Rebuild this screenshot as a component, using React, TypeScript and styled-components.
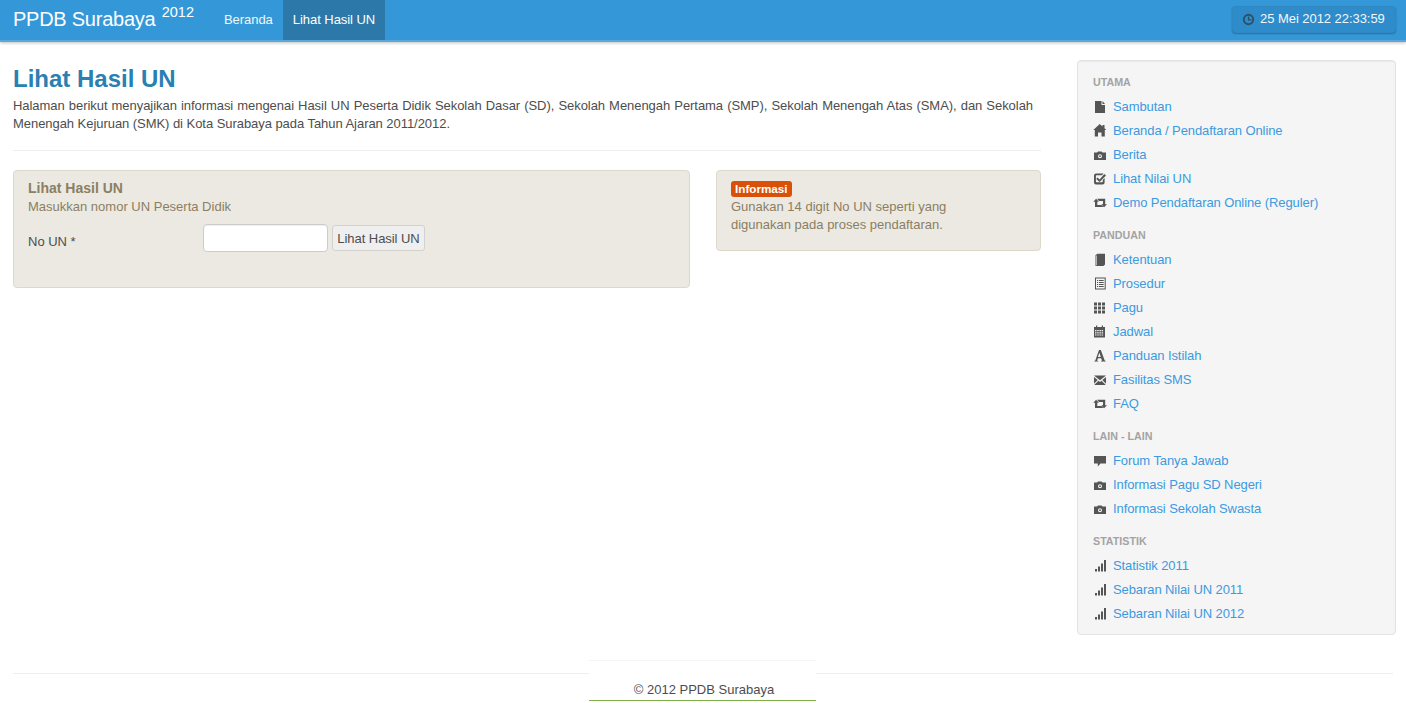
import React from 'react';
import styled, { createGlobalStyle } from 'styled-components';

const GlobalStyle = createGlobalStyle`
  html, body {
    margin: 0;
    padding: 0;
    background: #ffffff;
  }
  body {
    font-family: "Liberation Sans", Arial, sans-serif;
    font-size: 13px;
    line-height: 18px;
    color: #4d4d4d;
  }
`;

const Page = styled.div`
  display: flex;
  flex-direction: column;
  height: 703px;
  overflow: hidden;
`;

const Navbar = styled.header`
  flex: none;
  display: flex;
  align-items: flex-start;
  height: 40px;
  padding: 0 10px 0 13px;
  background: #3498d8;
  border-bottom: 2px solid #5ba6db;
  box-shadow: 0 1px 3px rgba(0, 0, 0, 0.25);
`;

const Brand = styled.a`
  display: block;
  width: 201px;
  font-size: 20px;
  letter-spacing: -0.25px;
  line-height: 38px;
  color: #ffffff;
  white-space: nowrap;

  sup {
    font-size: 14.5px;
    letter-spacing: 0;
    line-height: 0;
    margin-left: 1px;
    position: relative;
    top: -3px;
    vertical-align: 6px;
  }
`;

const NavLinks = styled.nav`
  display: flex;
  flex: 1;
`;

const NavLink = styled.a<{ $active?: boolean }>`
  display: block;
  height: 40px;
  padding: 0 10px;
  line-height: 40px;
  letter-spacing: -0.05px;
  color: #ffffff;
  opacity: ${(p) => (p.$active ? 1 : 0.92)};
  background: ${(p) => (p.$active ? '#2c78a9' : 'transparent')};
`;

const ClockButton = styled.div`
  display: flex;
  align-items: center;
  gap: 5px;
  box-sizing: border-box;
  width: 164px;
  height: 27px;
  margin-top: 6px;
  padding: 0 0 1px 9px;
  border-radius: 4px;
  background: #2f8ccb;
  color: #f2f7fb;
  border: 1px solid #3088c3;
  box-shadow: 0 1px 2px rgba(0, 0, 0, 0.28);
  font-size: 13px;
  letter-spacing: -0.05px;
  white-space: nowrap;
`;

const Body = styled.div`
  flex: 1;
  display: flex;
  align-items: flex-start;
  gap: 36px;
  padding: 0 10px 0 13px;
`;

const Main = styled.main`
  width: 1028px;
  flex: none;
`;

const PageTitle = styled.h1`
  margin: 23px 0 0;
  font-size: 24px;
  line-height: 28px;
  font-weight: bold;
  color: #2a7fb3;
`;

const Lead = styled.p`
  margin: 4px 0 0;
  padding-right: 8px;
  line-height: 18px;
  letter-spacing: -0.05px;
  text-align: justify;
`;

const Rule = styled.hr`
  margin: 17px 0 19px;
  border: 0;
  border-top: 1px solid #eeeeee;
`;

const PanelRow = styled.div`
  display: flex;
  align-items: flex-start;
  gap: 26px;
`;

const Panel = styled.section<{ $width: number; $height: number }>`
  box-sizing: border-box;
  width: ${(p) => p.$width}px;
  height: ${(p) => p.$height}px;
  padding: 9px 14px;
  background: #ece9e2;
  border: 1px solid #dcd8cc;
  border-radius: 4px;
  color: #8a7f63;
`;

const PanelTitle = styled.div`
  font-size: 14px;
  font-weight: bold;
  line-height: 16px;
  margin-bottom: 2px;
`;

const PanelText = styled.div`
  line-height: 18px;
`;

const FormRow = styled.div`
  display: flex;
  align-items: flex-start;
  margin-top: 8px;
`;

const FieldLabel = styled.label`
  width: 175px;
  padding-top: 9px;
  color: #4d4d4d;
`;

const TextInput = styled.input`
  box-sizing: border-box;
  width: 125px;
  height: 28px;
  margin: 0 4px 0 0;
  border: 1px solid #cccccc;
  border-radius: 4px;
  background: #ffffff;
  box-shadow: inset 0 1px 1px rgba(0, 0, 0, 0.07);
`;

const SubmitButton = styled.button`
  box-sizing: border-box;
  width: 93px;
  height: 26px;
  margin-top: 1px;
  padding: 0;
  border: 1px solid #d3d1cc;
  border-radius: 3px;
  background: #efefef;
  color: #4d4d4d;
  font: 13px "Liberation Sans", Arial, sans-serif;
  letter-spacing: -0.05px;
`;

const Badge = styled.span`
  display: block;
  width: fit-content;
  padding: 0 4px;
  margin-top: 1px;
  height: 16px;
  border-radius: 3px;
  background: #d95108;
  color: #ffffff;
  font-size: 11.7px;
  font-weight: bold;
  line-height: 16px;
`;

const InfoText = styled.div`
  width: 240px;
  line-height: 18px;
  margin-top: 1px;
`;

const Sidebar = styled.aside`
  flex: none;
  box-sizing: border-box;
  width: 319px;
  height: 575px;
  margin-top: 18px;
  padding: 9px 15px;
  background: #f5f5f5;
  border: 1px solid #e3e3e3;
  border-radius: 4px;
  box-shadow: inset 0 1px 1px rgba(0, 0, 0, 0.05);
`;

const Group = styled.div`
  & + & {
    margin-top: 9px;
  }
`;

const GroupHeader = styled.div`
  height: 24px;
  line-height: 24px;
  font-size: 10.7px;
  font-weight: bold;
  color: #a3a3a3;
  text-transform: uppercase;
`;

const MenuItem = styled.a`
  display: flex;
  align-items: center;
  gap: 5px;
  box-sizing: border-box;
  height: 24px;
  padding-top: 2px;
  letter-spacing: -0.09px;
  color: #3b9ae0;
`;

const IconBox = styled.svg<{ $tint?: string; $size?: number }>`
  flex: none;
  width: ${(p) => p.$size ?? 15}px;
  height: ${(p) => p.$size ?? 15}px;
  margin-bottom: ${(p) => (p.$size ? 0 : 2)}px;
  fill: ${(p) => p.$tint ?? '#555555'};
`;

const Footer = styled.footer`
  flex: none;
  position: relative;
  margin: 0 13px 2px;
  height: 27px;
  border-top: 1px solid #eeeeee;
`;

const FooterNote = styled.div`
  position: absolute;
  left: 576px;
  bottom: 0;
  box-sizing: border-box;
  width: 227px;
  height: 41px;
  padding: 20px 0 0 3px;
  background: #ffffff;
  border-top: 1px solid #f5f5f5;
  border-bottom: 1px solid #7fae45;
  text-align: center;
`;

type IconName = 'file' | 'home' | 'camera' | 'check' | 'retweet' | 'book' | 'list' | 'th' | 'calendar' | 'font' | 'envelope' | 'comment' | 'signal' | 'time';

const iconShapes: Record<IconName, React.ReactNode> = {
  file: <path d="M2 2h6.500v4H12v8H2zM9.500 2 12 5H9.500z" />,
  home: <path d="M6.700 1 9.500 3.500V2H11.500v3.300L13.300 7H11.800v6.500H8.500V9.500H5v4H1.800V7H.3z" />,
  camera: (
    <path
      fillRule="evenodd"
      d="M1 5.500h3L5 4.500h3.500l1 1H13V13H1zM7 7.200a2 2 0 1 0 0 4 2 2 0 0 0 0-4zM7 8.300a.9.9 0 1 1 0 1.800.9.9 0 0 1 0-1.800z"
    />
  ),
  check: (
    <path
      fillRule="evenodd"
      d="M3 2.500h7.500L9 4.300H3.500a.7.700 0 0 0-.6.6v5.700a.7.700 0 0 0 .6.600h5.700a.7.700 0 0 0 .6-.6V9l1.800-2v4.500a2 2 0 0 1-2 2H3a2 2 0 0 1-2-2v-7a2 2 0 0 1 2-2zM4.500 6.500 6.600 8.400 11.300 3l1.700 1.500L6.700 11 3.200 8z"
    />
  ),
  retweet: <path d="M.3 6.700 3.100 3.800 5.900 6.700H4.300v3.200h4.200l2 2.200H2V6.700zM4 3.800h8.200v5.500H14l-2.900 2.900-2.800-2.900H10V6H6z" />,
  book: (
    <path
      fillRule="evenodd"
      d="M2.500 3 4.500 1.800H12v10.700l-1.500 1.500H2.500zM3.200 3.400v9.900h.6V3.400z"
    />
  ),
  list: (
    <path
      fillRule="evenodd"
      d="M2 1.500h10.700v12H2zM3 2.500v10h8.700v-10zM4 4h1.200v1H4zM6 4h4.700v1H6zM4 6h1.200v1H4zM6 6h4.700v1H6zM4 8h1.200v1H4zM6 8h4.700v1H6zM4 10h1.200v1H4zM6 10h4.700v1H6z"
    />
  ),
  th: <path d="M1 2.500h3v3H1zM5 2.500h3v3H5zM9 2.500h3v3H9zM1 6.500h3v3H1zM5 6.500h3v3H5zM9 6.500h3v3H9zM1 10.500h3v3H1zM5 10.500h3v3H5zM9 10.500h3v3H9z" />,
  calendar: (
    <path
      fillRule="evenodd"
      d="M1 3h2V1.500h1.200V3h4.600V1.500H10V3h2v10.500H1zM2 6v1.200h1.500V6zM4.200 6v1.200h1.500V6zM6.400 6v1.200h1.500V6zM8.600 6v1.200h1.500V6zM2 8.200v1.200h1.500V8.200zM4.200 8.200v1.200h1.500V8.200zM6.400 8.200v1.200h1.500V8.200zM8.600 8.200v1.200h1.500V8.200zM2 10.400v1.200h1.500v-1.200zM4.200 10.400v1.200h1.500v-1.200zM6.400 10.400v1.200h1.500v-1.200zM8.600 10.400v1.200h1.500v-1.200z"
    />
  ),
  font: (
    <path
      fillRule="evenodd"
      d="M6 2h1.800l3.900 10.600 1 .3v.6H8v-.6l1-.3-.8-2.400H5l-.9 2.400 1.100.3v.6H1.300v-.6l1-.3zM6.400 4.800 4.900 9h2.900z"
    />
  ),
  envelope: <path d="M1 3.500h12L7 8.300zM1 5 4.700 8 1 11.700zM13 5v6.700L9.300 8zM5.500 8.700 7 9.900l1.500-1.200 4.300 4.300H1.200z" />,
  comment: <path d="M1 3h12v7.500H7.500L4.800 13.500v-3H1z" />,
  signal: <path d="M2 11h2v2.500H2zM5 8.500h2v5H5zM8 5.500h2v8H8zM11 2h2v11.500h-2z" />,
  time: (
    <path
      fillRule="evenodd"
      d="M7.500 1a6.500 6.500 0 1 1 0 13 6.500 6.500 0 0 1 0-13zM7.500 3.200a4.300 4.300 0 1 0 0 8.600 4.300 4.300 0 0 0 0-8.600zM6.800 4h1.600v3.100h2.400v1.500H6.800z"
    />
  ),
};

function Icon({ name, tint, size }: { name: IconName; tint?: string; size?: number }) {
  return (
    <IconBox viewBox="0 0 15 15" $tint={tint} $size={size}>
      {iconShapes[name]}
    </IconBox>
  );
}

const menu: { title: string; items: [IconName, string][] }[] = [
  {
    title: 'Utama',
    items: [
      ['file', 'Sambutan'],
      ['home', 'Beranda / Pendaftaran Online'],
      ['camera', 'Berita'],
      ['check', 'Lihat Nilai UN'],
      ['retweet', 'Demo Pendaftaran Online (Reguler)'],
    ],
  },
  {
    title: 'Panduan',
    items: [
      ['book', 'Ketentuan'],
      ['list', 'Prosedur'],
      ['th', 'Pagu'],
      ['calendar', 'Jadwal'],
      ['font', 'Panduan Istilah'],
      ['envelope', 'Fasilitas SMS'],
      ['retweet', 'FAQ'],
    ],
  },
  {
    title: 'Lain - Lain',
    items: [
      ['comment', 'Forum Tanya Jawab'],
      ['camera', 'Informasi Pagu SD Negeri'],
      ['camera', 'Informasi Sekolah Swasta'],
    ],
  },
  {
    title: 'Statistik',
    items: [
      ['signal', 'Statistik 2011'],
      ['signal', 'Sebaran Nilai UN 2011'],
      ['signal', 'Sebaran Nilai UN 2012'],
    ],
  },
];

export default function App() {
  return (
    <Page>
      <GlobalStyle />
      <Navbar>
        <Brand>
          PPDB Surabaya <sup>2012</sup>
        </Brand>
        <NavLinks>
          <NavLink>Beranda</NavLink>
          <NavLink $active>Lihat Hasil UN</NavLink>
        </NavLinks>
        <ClockButton>
          <Icon name="time" tint="#2c4f6b" size={13} />
          25 Mei 2012 22:33:59
        </ClockButton>
      </Navbar>
      <Body>
        <Main>
          <PageTitle>Lihat Hasil UN</PageTitle>
          <Lead>
            Halaman berikut menyajikan informasi mengenai Hasil UN Peserta Didik Sekolah Dasar (SD), Sekolah Menengah
            Pertama (SMP), Sekolah Menengah Atas (SMA), dan Sekolah Menengah Kejuruan (SMK) di Kota Surabaya pada Tahun
            Ajaran 2011/2012.
          </Lead>
          <Rule />
          <PanelRow>
            <Panel $width={677} $height={118}>
              <PanelTitle>Lihat Hasil UN</PanelTitle>
              <PanelText>Masukkan nomor UN Peserta Didik</PanelText>
              <FormRow>
                <FieldLabel>No UN *</FieldLabel>
                <TextInput />
                <SubmitButton>Lihat Hasil UN</SubmitButton>
              </FormRow>
            </Panel>
            <Panel $width={325} $height={81}>
              <Badge>Informasi</Badge>
              <InfoText>Gunakan 14 digit No UN seperti yang digunakan pada proses pendaftaran.</InfoText>
            </Panel>
          </PanelRow>
        </Main>
        <Sidebar>
          {menu.map((group) => (
            <Group key={group.title}>
              <GroupHeader>{group.title}</GroupHeader>
              {group.items.map(([icon, label]) => (
                <MenuItem key={label}>
                  <Icon name={icon} />
                  {label}
                </MenuItem>
              ))}
            </Group>
          ))}
        </Sidebar>
      </Body>
      <Footer>
        <FooterNote>© 2012 PPDB Surabaya</FooterNote>
      </Footer>
    </Page>
  );
}
